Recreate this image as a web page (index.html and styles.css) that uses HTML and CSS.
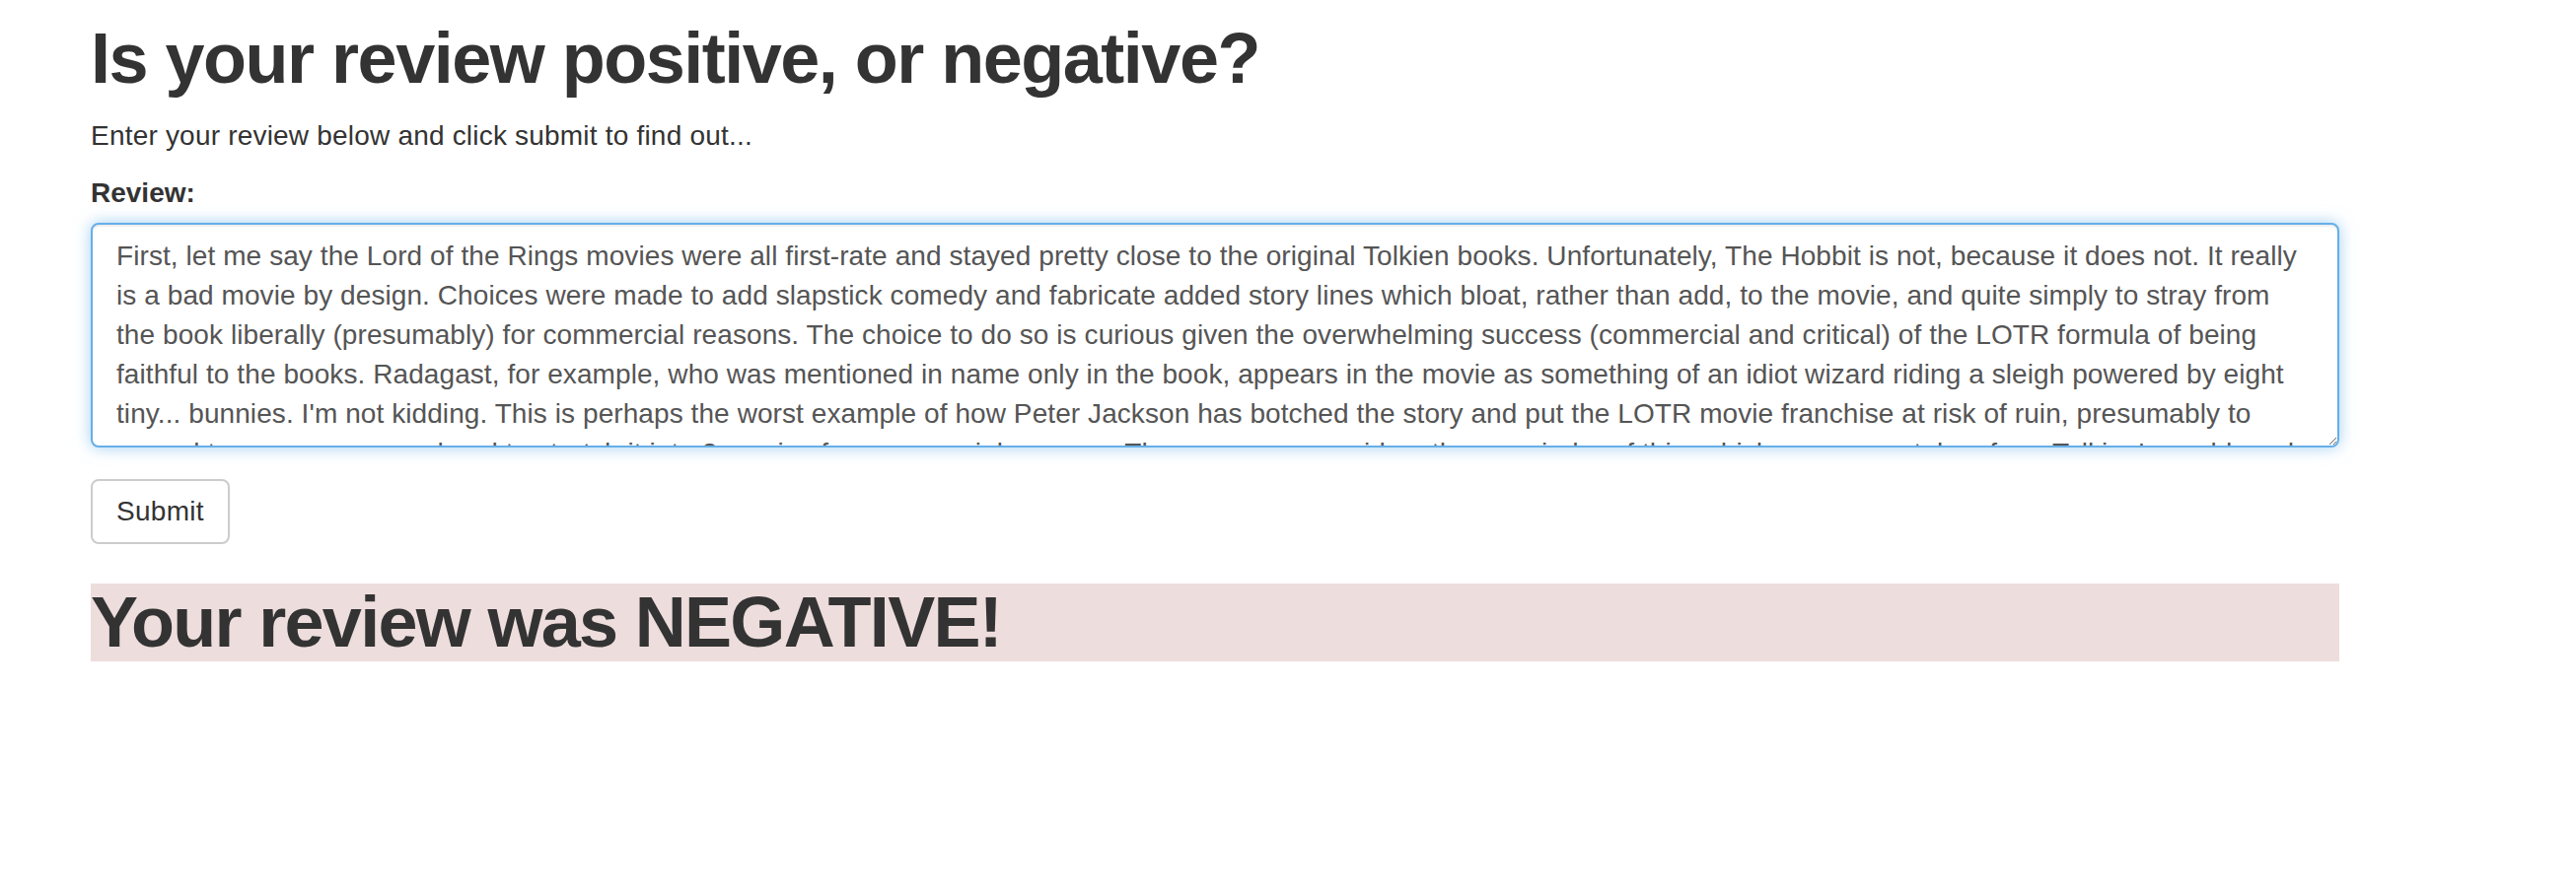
FILE: index.html
```html
<!DOCTYPE html>
<html lang="en">
<head>
<meta charset="utf-8">
<title>Review sentiment</title>
<link rel="stylesheet" href="styles.css">
</head>
<body>
<div class="page">
  <h1 class="title">Is your review positive, or negative?</h1>
  <p class="lead-text">Enter your review below and click submit to find out...</p>
  <form class="review-form">
    <div class="form-group">
      <label class="field-label" for="review">Review:</label>
      <textarea id="review" class="form-control is-focused" spellcheck="false">First, let me say the Lord of the Rings movies were all first-rate and stayed pretty close to the original Tolkien books. Unfortunately, The Hobbit is not, because it does not. It really
is a bad movie by design. Choices were made to add slapstick comedy and fabricate added story lines which bloat, rather than add, to the movie, and quite simply to stray from
the book liberally (presumably) for commercial reasons. The choice to do so is curious given the overwhelming success (commercial and critical) of the LOTR formula of being
faithful to the books. Radagast, for example, who was mentioned in name only in the book, appears in the movie as something of an idiot wizard riding a sleigh powered by eight
tiny... bunnies. I'm not kidding. This is perhaps the worst example of how Peter Jackson has botched the story and put the LOTR movie franchise at risk of ruin, presumably to
appeal to a younger crowd and to stretch it into 3 movies for commercial reasons. The more one considers the remainder of this, which was never taken from Tolkien's world, and also</textarea>
    </div>
    <button type="button" class="btn">Submit</button>
  </form>
  <h1 class="result result-negative">Your review was NEGATIVE!</h1>
</div>
</body>
</html>
```

FILE: styles.css
```css
html, body {
  margin: 0;
  padding: 0;
  background: #fff;
}

body {
  font-family: "Liberation Sans", Arial, Helvetica, sans-serif;
  font-size: 28px;
  line-height: 40px;
  color: #333;
}

.page {
  width: 2280px;
  margin-left: 92px;
}

.title,
.result {
  font-size: 72px;
  line-height: 79px;
  font-weight: bold;
  color: #333;
}

.title {
  margin: 20px 0 19px;
  letter-spacing: -1.5px;
}

.lead-text {
  margin: 0 0 18px;
  letter-spacing: 0.2px;
}

.form-group {
  margin-bottom: 32px;
}

.field-label {
  display: inline-block;
  margin-bottom: 10px;
  font-weight: bold;
}

.form-control {
  display: block;
  box-sizing: border-box;
  width: 100%;
  height: 228px;
  margin: 0;
  padding: 12px 24px;
  font-family: "Liberation Sans", Arial, Helvetica, sans-serif;
  font-size: 28px;
  line-height: 40px;
  letter-spacing: 0.08px;
  color: #555;
  background: #fff;
  border: 2px solid #ccc;
  border-radius: 8px;
  resize: vertical;
  overflow: hidden;
  white-space: pre-wrap;
}

.form-control.is-focused {
  border-color: #66afe9;
  outline: 0;
  box-shadow: inset 0 2px 2px rgba(0, 0, 0, 0.075), 0 0 16px rgba(102, 175, 233, 0.6);
}

.btn {
  display: inline-block;
  box-sizing: border-box;
  height: 66px;
  padding: 12px 24px;
  font-family: "Liberation Sans", Arial, Helvetica, sans-serif;
  font-size: 28px;
  line-height: 38px;
  letter-spacing: 0.3px;
  color: #333;
  background: #fff;
  border: 2px solid #ccc;
  border-radius: 8px;
}

.result {
  margin: 40px 0 0;
  letter-spacing: -1.7px;
}

.result-negative {
  background: #eedddd;
}
```
